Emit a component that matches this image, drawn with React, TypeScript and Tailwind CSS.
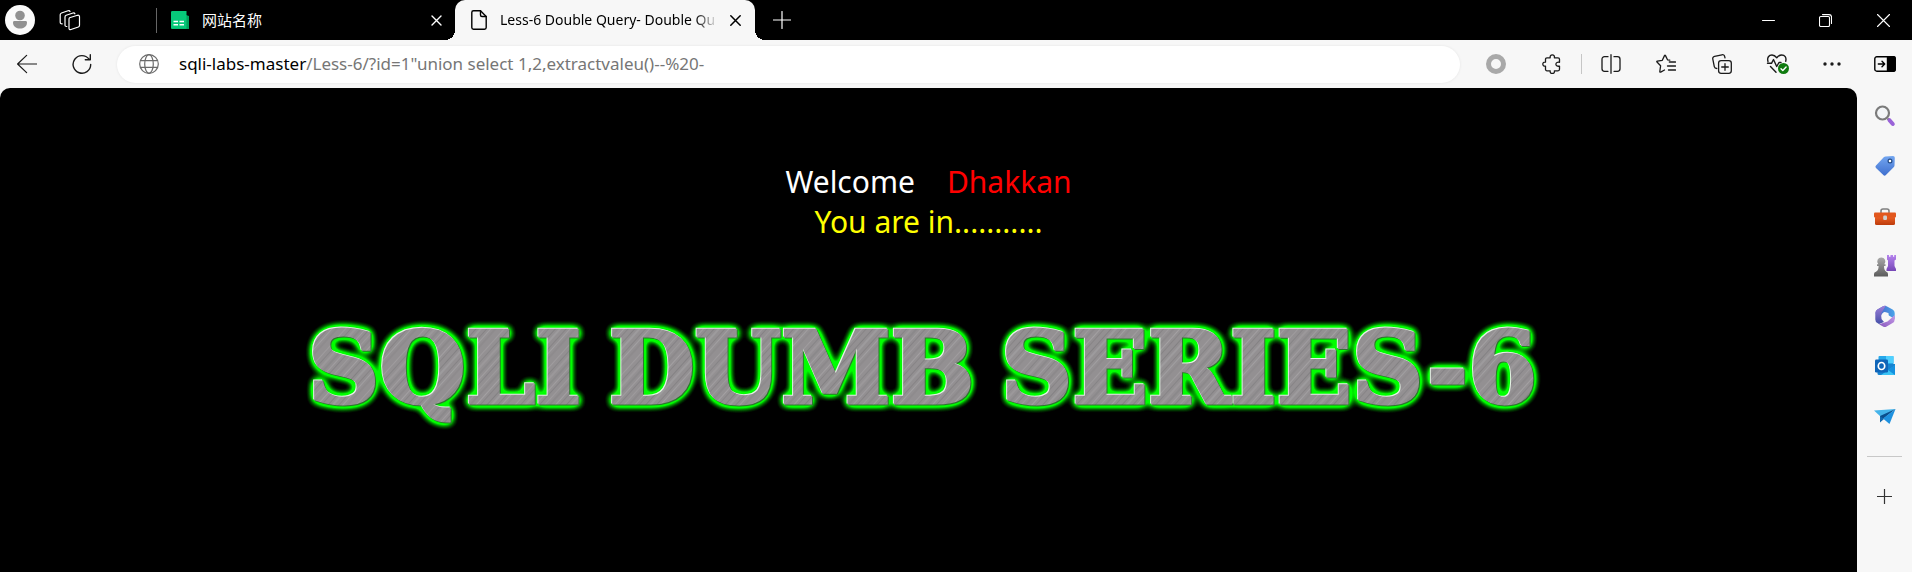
import { useState, type ReactNode } from "react";

const HOST = "sqli-labs-master";
const PATH = '/Less-6/?id=1"union select 1,2,extractvaleu()--%20-';

type IconButtonProps = { label: string; className: string; children: ReactNode };

function IconButton({ label, className, children }: IconButtonProps) {
  return (
    <button type="button" aria-label={label} className={`flex shrink-0 items-center justify-center ${className}`}>
      {children}
    </button>
  );
}

type LineProps = { size?: string; box?: string; width?: number; children: ReactNode };

function Line({ size = "size-5", box = "0 0 20 20", width = 1.2, children }: LineProps) {
  return (
    <svg viewBox={box} className={size} fill="none" stroke="currentColor" strokeWidth={width} strokeLinecap="round" strokeLinejoin="round" aria-hidden="true">
      {children}
    </svg>
  );
}

function TabStrip() {
  return (
    <header className="flex h-10 items-center bg-black text-white">
      <IconButton label="Profile" className="w-10">
        <svg viewBox="0 0 30 30" className="size-[30px]" aria-hidden="true">
          <circle cx="15" cy="15" r="15" fill="#fafafa" />
          <circle cx="15" cy="10.5" r="4.8" fill="#919191" />
          <path d="M8 17.5c0-1 .6-1.5 1.5-1.5h11c.9 0 1.500.5 1.500 1.500 0 4-3.500 6-7 6s-7-2-7-6z" fill="#919191" />
        </svg>
      </IconButton>
      <IconButton label="Workspaces" className="w-[60px]">
        <Line size="size-[22px]" box="0 0 22 22" width={1.2}>
          <path d="M10.500 8.800 18.500 6.300c1.200-.3 2 .2 2 1.400v8.600c0 .8-.4 1.400-1.200 1.700l-7.300 2.500c-1.200.4-2-.2-2-1.300v-8.800c0-.8.2-1.300.500-1.600z" />
          <path d="M7.800 17.500c-1.200.1-1.800-.5-1.800-1.500V8c0-.9.4-1.400 1.200-1.700L14 4c1-.3 1.600 0 1.900.8" />
          <path d="M3.200 14.800C2 14.900 1.200 14.300 1.200 13.200V5.800c0-.9.5-1.500 1.300-1.800L9 1.700c1-.3 1.700 0 2 .7" />
        </Line>
      </IconButton>
      <div className="ml-14 h-[25px] w-px bg-[#666666]" />
      <div className="flex w-[298px] items-center pl-[14px]">
        <svg viewBox="0 0 18 18" className="size-[18px]" aria-hidden="true">
          <path d="M0 1.500Q0 0 1.500 0H15v4l3 1v13H1.500Q0 18 0 16.500z" fill="#00a35c" />
          <path d="M0 1.500Q0 0 1.500 0H15.500v17.800H1.500Q0 18 0 16.500z" fill="#07c879" />
          <path d="M2.500 10.500H7M8.500 10.500H13M2.500 13.800H7M8.500 13.800H13" stroke="#fff" strokeWidth="1.500" />
        </svg>
        <span className="ml-[13px] flex-1 text-[15px] leading-5">网站名称</span>
        <IconButton label="Close tab" className="w-[38px]">
          <Line size="size-[11px]" box="0 0 11 11" width={1.4}>
            <path d="M1 1l9 9M10 1l-9 9" />
          </Line>
        </IconButton>
      </div>
      <div className="relative flex h-10 w-[300px] items-center rounded-t-[10px] bg-[#f7f7f7] pl-4 text-black">
        <span className="absolute bottom-0 -left-[10px] size-[10px] bg-[radial-gradient(circle_at_0_0,#000000_10px,#f7f7f7_10px)]" />
        <span className="absolute -right-[10px] bottom-0 size-[10px] bg-[radial-gradient(circle_at_100%_0,#000000_10px,#f7f7f7_10px)]" />
        <Line size="w-4 h-5" box="0 0 16 20" width={1.4}>
          <path d="M2.500.8H9.500L15.200 6.500V17.500c0 1-.7 1.700-1.700 1.700h-11C1.500 19.200.8 18.500.8 17.500V2.500C.8 1.500 1.500.8 2.500.8z" />
          <path d="M9.500.8V5c0 1 .6 1.500 1.500 1.500h4.200" />
        </Line>
        <span className="ml-[13px] w-[218px] overflow-hidden text-[14px] leading-5 whitespace-nowrap [mask-image:linear-gradient(to_right,black_195px,transparent_218px)]">
          Less-6 Double Query- Double Qu
        </span>
        <IconButton label="Close tab" className="w-[34px]">
          <Line size="size-[11px]" box="0 0 11 11" width={1.5}>
            <path d="M.8.8l9.400 9.400M10.200.8.800 10.200" />
          </Line>
        </IconButton>
      </div>
      <IconButton label="New tab" className="w-[53px]">
        <Line size="size-[18px]" box="0 0 18 18" width={1.2}>
          <path d="M9 .5v17M.5 9h17" />
        </Line>
      </IconButton>
      <div className="flex-1" />
      <IconButton label="Minimize" className="w-[57px]">
        <Line size="size-[13px]" box="0 0 13 13" width={1}>
          <path d="M.5 6.500h12" />
        </Line>
      </IconButton>
      <IconButton label="Restore" className="w-[57px]">
        <Line size="size-[13px]" box="0 0 13 13" width={1.1}>
          <rect x=".5" y="2.500" width="10" height="10" rx="1.200" />
          <path d="M3.500.6h6.500a2.500 2.500 0 0 1 2.500 2.500v6.400" />
        </Line>
      </IconButton>
      <IconButton label="Close window" className="w-[58px]">
        <Line size="size-[13px]" box="0 0 13 13" width={1.1}>
          <path d="M.5.5l12 12M12.500.5l-12 12" />
        </Line>
      </IconButton>
    </header>
  );
}

function AddressBar() {
  const [url, setUrl] = useState(HOST + PATH);
  return (
    <label className="flex h-[37px] flex-1 items-center rounded-full bg-white pl-[22px] shadow-[0_0_3px_rgba(0,0,0,0.08)]">
      <span className="text-[#6b6b6b]">
        <Line>
          <circle cx="10" cy="10" r="9.300" />
          <ellipse cx="10" cy="10" rx="4.300" ry="9.300" />
          <path d="M1.500 6.600h17M1.500 13.400h17" />
        </Line>
      </span>
      <span className="relative ml-5 flex flex-1 items-center text-[17px] leading-6">
        <input
          aria-label="Address"
          value={url}
          onChange={(e) => setUrl(e.target.value)}
          className="w-full bg-transparent p-0 text-[#767676] outline-none"
        />
        {url.startsWith(HOST) && (
          <span aria-hidden="true" className="pointer-events-none absolute left-0 bg-white text-black">
            {HOST}
          </span>
        )}
      </span>
    </label>
  );
}

function Toolbar() {
  return (
    <div className="flex h-12 items-center bg-[#f7f7f7] text-[#1b1b1b]">
      <IconButton label="Back" className="w-[54px]">
        <Line>
          <path d="M.6 10h19M9.600 1.400.6 10l9 8.600" />
        </Line>
      </IconButton>
      <IconButton label="Refresh" className="mr-2 w-[55px]">
        <Line width={1.4}>
          <path d="M18.700 10.500A8.800 8.800 0 1 1 17 5.200M18.300.8v5h-5" />
        </Line>
      </IconButton>
      <AddressBar />
      <IconButton label="Assistant" className="ml-2 w-14">
        <svg viewBox="0 0 20 20" className="size-5" fill="none" aria-hidden="true">
          <circle cx="10" cy="10" r="7.500" stroke="#a9a9a9" strokeWidth="5" />
        </svg>
      </IconButton>
      <IconButton label="Extensions" className="w-14">
        <Line width={1.3}>
          <path d="M5 3.800h3.200c-.3-1.900.6-3 2.100-3s2.400 1.100 2.100 3h3.600c.9 0 1.500.6 1.500 1.500v3c-2-.4-3.600.300-3.600 1.900s1.600 2.400 3.600 1.900v3.200c0 .9-.6 1.500-1.500 1.500h-3.600c.3 1.800-.6 2.700-2.100 2.700s-2.400-.9-2.100-2.700H5c-.9 0-1.500-.6-1.500-1.500v-3.200c-1.700.3-2.700-.6-2.700-2s1-2.300 2.700-2V5.300c0-.9.6-1.500 1.500-1.500z" />
        </Line>
      </IconButton>
      <div className="mx-px h-5 w-px shrink-0 bg-[#c6c6c6]" />
      <IconButton label="Split screen" className="w-[55px]">
        <Line width={1.3}>
          <path d="M10 .7v18.600M7 2.700H3.500C2 2.700 1 3.700 1 5.200v9.600c0 1.500 1 2.500 2.500 2.500H7M13 2.700h3.500c1.500 0 2.500 1 2.500 2.500v9.600c0 1.500-1 2.500-2.500 2.500H13" />
        </Line>
      </IconButton>
      <IconButton label="Favorites" className="w-14">
        <Line width={1.3}>
          <path d="M13.800 6.200 11.500 5.800 9.500 1.600Q9 .8 8.500 1.600L6.300 6.300 1.300 7.100Q.4 7.400 1 8l3.600 3.800-.8 5.700q0 1 .9.600L8.500 16M13.300 8h6.200M11.500 12h8M12.500 16h7" />
        </Line>
      </IconButton>
      <IconButton label="Collections" className="w-14">
        <Line width={1.3}>
          <rect x="6.600" y="6.600" width="12.700" height="12.700" rx="2.500" />
          <path d="M13 9.700v6.600M9.700 13h6.600M4.800 14.500c-1.300 0-2.200-.6-2.500-1.900L.8 5.200C.5 3.800 1.200 2.700 2.600 2.400L9.900.8c1.400-.3 2.500.4 2.800 1.800l.3 1.300" />
        </Line>
      </IconButton>
      <IconButton label="Browser essentials" className="w-14">
        <Line size="w-6 h-5" box="0 0 24 20" width={1.4}>
          <path d="M2 7.500C.8 3.500 3 1 6 1c2 0 3.400 1 4.800 2.800C12.200 2 13.600 1 15.700 1c3 0 5 2.500 4 6.200M1.500 9.300h4l2-3.800 3.200 7 2.300-4h2M4.500 12.500l5.500 5.700" />
          <circle cx="17.500" cy="14.500" r="5.500" fill="#0f7b0f" stroke="none" />
          <path d="M15 14.700l1.800 1.800 3.300-3.500" stroke="#fff" />
        </Line>
      </IconButton>
      <IconButton label="Settings and more" className="w-[52px]">
        <Line size="w-[18px] h-1" box="0 0 18 4">
          <g fill="currentColor" stroke="none">
            <circle cx="2" cy="2" r="1.700" />
            <circle cx="9" cy="2" r="1.700" />
            <circle cx="16" cy="2" r="1.700" />
          </g>
        </Line>
      </IconButton>
      <IconButton label="Hide sidebar" className="w-[54px] text-black">
        <Line size="w-[22px] h-4" box="0 0 22 16" width={1.4}>
          <rect x=".8" y=".8" width="20.400" height="14.400" rx="2" />
          <path d="M13.500.8h6c1 0 1.700.7 1.700 1.700v11c0 1-.7 1.700-1.700 1.700h-6z" fill="currentColor" />
          <path d="M4.300 8h6.200M8 5.300 10.700 8 8 10.700" />
        </Line>
      </IconButton>
    </div>
  );
}

function SideItem({ label, children }: { label: string; children: ReactNode }) {
  return (
    <IconButton label={label} className="h-[50px] w-full">
      <svg viewBox="0 0 22 22" className="size-[22px]" aria-hidden="true">
        {children}
      </svg>
    </IconButton>
  );
}

function Sidebar() {
  return (
    <aside className="flex w-[55px] shrink-0 flex-col items-center bg-[#f7f7f7] pt-[3px]">
      <svg className="h-0 w-0" aria-hidden="true">
        <defs>
          <linearGradient id="tag" x1="0" y1="0" x2="0" y2="1">
            <stop offset="0" stopColor="#73a6f0" />
            <stop offset="1" stopColor="#3f6fce" />
          </linearGradient>
          <linearGradient id="box" x1="0" y1="0" x2="0" y2="1">
            <stop offset="0" stopColor="#ef6427" />
            <stop offset="1" stopColor="#bd3b0b" />
          </linearGradient>
          <linearGradient id="pawn" x1="0" y1="0" x2="0" y2="1">
            <stop offset="0" stopColor="#a9a9a9" />
            <stop offset="1" stopColor="#5c5c5c" />
          </linearGradient>
          <linearGradient id="rook" x1="0" y1="0" x2="0" y2="1">
            <stop offset="0" stopColor="#b583ee" />
            <stop offset="1" stopColor="#7647b6" />
          </linearGradient>
          <linearGradient id="officeTop" x1="0" y1="0" x2="1" y2="0">
            <stop offset="0" stopColor="#4b5cc4" />
            <stop offset="1" stopColor="#48a5ea" />
          </linearGradient>
          <linearGradient id="officeLeft" x1="0" y1="0" x2="0" y2="1">
            <stop offset="0" stopColor="#a07fd9" />
            <stop offset="1" stopColor="#4450a8" />
          </linearGradient>
          <linearGradient id="officeBottom" x1="0" y1="1" x2="1" y2="0">
            <stop offset="0" stopColor="#8758bd" />
            <stop offset="1" stopColor="#c79be8" />
          </linearGradient>
        </defs>
      </svg>
      <SideItem label="Search">
        <path d="M13.500 13.500l2.500 2.500" stroke="#777" strokeWidth="2" />
        <circle cx="8.500" cy="8" r="6.500" fill="#f3f5f7" stroke="#7b7b7b" strokeWidth="2.200" />
        <path d="M15.500 15.200l3.300 3.800" stroke="#9a63d8" strokeWidth="4" strokeLinecap="round" />
      </SideItem>
      <SideItem label="Shopping">
        <path d="M11.500 1.500 19 1q1.800 0 1.800 1.800l-.3 7.700q0 .8-.6 1.400l-8 8.200q-1.300 1.300-2.600 0L2 13q-1.300-1.300 0-2.600L10 2q.6-.5 1.500-.5z" fill="url(#tag)" />
        <circle cx="16" cy="6" r="1.900" fill="#fff" stroke="#244b85" strokeWidth="1.200" />
      </SideItem>
      <SideItem label="Tools">
        <path d="M7 8V6q0-2 2-2h4q2 0 2 2v2" fill="none" stroke="#808080" strokeWidth="1.600" />
        <rect x="1" y="11" width="20" height="9" rx="1.500" fill="url(#box)" />
        <rect x="0" y="7.500" width="22" height="5" rx="1" fill="#e2571d" />
        <rect x="9.200" y="10.500" width="3.800" height="4.500" rx="1.200" fill="#cfcfcf" />
      </SideItem>
      <SideItem label="Games">
        <path d="M13 0h2v1.800h1.500V0H19v1.800h1.200V0H22v4.500l-1.500 1V11L22 14v2H12.500v-2l1.500-3V5.500l-1-1z" fill="url(#rook)" />
        <path d="M7.300 2.500a4 4 0 0 1 3 6.700h1.200v1.800H10c0 3 .7 4.500 2.300 5.700q1.700.6 1.700 2.300v2.500H0V19q0-1.700 2-2.300C4 15.500 4.600 14 4.600 11H3V9.200h1.300a4 4 0 0 1 3-6.700z" fill="url(#pawn)" />
      </SideItem>
      <SideItem label="Microsoft 365">
        <path d="M9 1.200q1.800-1 3.600 0l6 3.300Q20.700 5.700 20.700 8v6l-6.200-3.800V8L10 7 4 14 1.600 8q0-2.300 1.800-3.400z" fill="url(#officeTop)" />
        <path d="M9 1.200 11.800.6 7.500 8v6L10 17l-5 2-1.600-1Q1.300 16.800 1.300 14.500V8q0-2.300 2.100-3.400z" fill="url(#officeLeft)" />
        <path d="M20.700 10v4.500q0 2.300-2.100 3.500l-6 3.500q-1.800 1-3.600 0L5 19.200l8.500-2.700 4.500-4z" fill="url(#officeBottom)" />
        <circle cx="11" cy="11" r="3.500" fill="#f7f7f7" />
      </SideItem>
      <SideItem label="Outlook">
        <rect x="4.500" y="1" width="15" height="14" rx="1" fill="#26a8ea" />
        <path d="M12 1h7.500v7H12z" fill="#4fd0ff" />
        <path d="M3.500 9h17.500v11H5q-1.500 0-1.500-1.500z" fill="#1683d0" />
        <path d="M21 10.500V20H7z" fill="#39c3f5" />
        <path d="M21 10v10l-7-5z" fill="#1490df" />
        <rect x="1" y="4.500" width="13" height="13" rx="1.200" fill="#0f65b8" />
        <ellipse cx="7.500" cy="11" rx="3.200" ry="3.500" fill="none" stroke="#fff" strokeWidth="1.700" />
      </SideItem>
      <SideItem label="Drop">
        <path d="M0 5.500 21.500 4 7 12z" fill="#45b4ea" />
        <path d="M21.500 4 6 11v5.500l3-2.500z" fill="#0a4e8d" />
        <path d="M21.500 4 15.500 19 9 13.500z" fill="#1e91df" />
        <path d="M6 11v6.500l4-3.500z" fill="#1368ad" />
      </SideItem>
      <div className="mt-[15px] h-px w-[35px] bg-[#c8c8c8]" />
      <IconButton label="Customize sidebar" className="mt-3.5 h-[50px] w-full text-[#333333]">
        <Line size="size-[15px]" box="0 0 15 15" width={1.2}>
          <path d="M7.500.3v14.400M.3 7.500h14.400" />
        </Line>
      </IconButton>
    </aside>
  );
}

const STREAKS = [
  [0, 2, "#858284"], [4, 1, "#aba8aa"], [7, 1, "#7a7779"], [11, 1, "#a5a2a4"], [14, 2, "#868385"],
  [19, 1, "#b0adaf"], [22, 1, "#7d7a7c"], [27, 1, "#777476"], [30, 2, "#a6a3a5"], [35, 1, "#7b787a"],
  [38, 1, "#adaaac"], [41, 2, "#8a8789"], [48, 1, "#a9a6a8"], [52, 1, "#7c797b"], [55, 2, "#a19ea0"],
] as const;

function Banner() {
  return (
    <svg viewBox="0 0 1260 130" className="h-[130px] w-[1260px] max-w-full" role="img" aria-label="SQLI DUMB SERIES-6">
      <defs>
        <pattern id="metal" width="59" height="59" patternUnits="userSpaceOnUse" patternTransform="rotate(42)">
          <rect width="59" height="59" fill="#939092" />
          {STREAKS.map(([x, w, fill]) => (
            <rect key={x} x={x} width={w} height="59" fill={fill} opacity="0.55" />
          ))}
        </pattern>
        <filter id="glow" x="0" y="0" width="1260" height="130" filterUnits="userSpaceOnUse" colorInterpolationFilters="sRGB">
          <feGaussianBlur in="SourceAlpha" stdDeviation="4" result="wide" />
          <feComponentTransfer in="wide" result="soft">
            <feFuncA type="linear" slope="4" intercept="-0.1" />
          </feComponentTransfer>
          <feFlood floodColor="#00ff00" />
          <feComposite in2="soft" operator="in" result="halo" />
          <feOffset in="SourceAlpha" dx="-1" dy="-1" result="up" />
          <feFlood floodColor="#e4f0e4" />
          <feComposite in2="up" operator="in" result="light" />
          <feOffset in="SourceAlpha" dx="1" dy="1" result="down" />
          <feFlood floodColor="#2b7a2b" />
          <feComposite in2="down" operator="in" result="dark" />
          <feMerge>
            <feMergeNode in="halo" />
            <feMergeNode in="dark" />
            <feMergeNode in="light" />
            <feMergeNode in="SourceGraphic" />
          </feMerge>
        </filter>
      </defs>
      <g filter="url(#glow)" fill="url(#metal)" stroke="url(#metal)" strokeWidth="3" className="font-['DejaVu_Serif',serif] text-[99px] font-bold">
        <text x="9" y="95">SQLI</text>
        <text x="310" y="95">DUMB</text>
        <text x="702" y="95">SERIES-6</text>
      </g>
    </svg>
  );
}

export default function App() {
  return (
    <div className="flex min-h-screen flex-col bg-[#f7f7f7] font-['Noto_Sans','Noto_Sans_CJK_SC',sans-serif]">
      <TabStrip />
      <Toolbar />
      <div className="flex flex-1">
        <main className="flex min-w-0 flex-1 flex-col items-center rounded-t-[10px] bg-black pt-[74px]">
          <div className="text-center text-[30px] leading-10 text-[#ffff00]">
            <p>
              <span className="text-white">Welcome</span>
              <span className="ml-8 text-[#ff0000]">Dhakkan</span>
            </p>
            <p>You are in...........</p>
          </div>
          <div className="mt-[66px] flex w-full justify-center">
            <Banner />
          </div>
        </main>
        <Sidebar />
      </div>
    </div>
  );
}
